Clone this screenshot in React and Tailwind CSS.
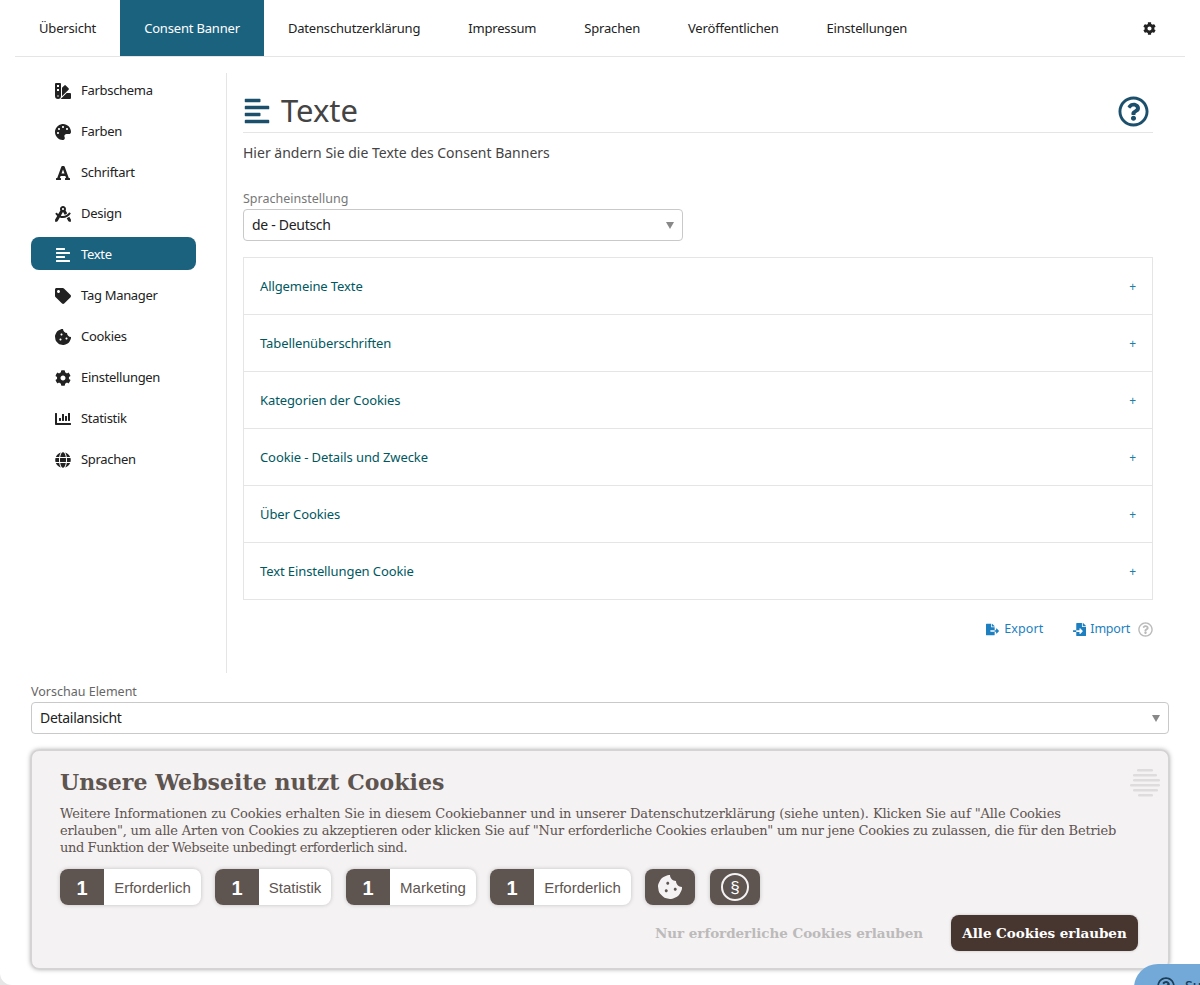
import React from "react";
import {
  FaSwatchbook, FaPalette, FaFont, FaDraftingCompass, FaAlignLeft, FaTag, FaCookieBite, FaCog,
  FaChartBar, FaGlobe, FaFileExport, FaFileImport, FaRegQuestionCircle,
} from "react-icons/fa";

const tabs = ["Übersicht", "Consent Banner", "Datenschutzerklärung", "Impressum", "Sprachen", "Veröffentlichen", "Einstellungen"];
const side = [
  ["Farbschema", FaSwatchbook], ["Farben", FaPalette], ["Schriftart", FaFont], ["Design", FaDraftingCompass],
  ["Texte", FaAlignLeft], ["Tag Manager", FaTag], ["Cookies", FaCookieBite], ["Einstellungen", FaCog],
  ["Statistik", FaChartBar], ["Sprachen", FaGlobe],
];
const acc = ["Allgemeine Texte", "Tabellenüberschriften", "Kategorien der Cookies", "Cookie - Details und Zwecke", "Über Cookies", "Text Einstellungen Cookie"];
const pills = [["Erforderlich", "w-[141px]"], ["Statistik", "w-[116px]"], ["Marketing", "ml-px w-[130px]"], ["Erforderlich", "w-[141px]"]];

function Select({ value, className }) {
  return (
    <div className={`flex h-8 items-center justify-between rounded border border-[#c9c9c9] bg-white pb-[2px] pl-2 pr-[8px] text-[14px] tracking-[-0.3px] text-[#222] ${className}`}>
      <span>{value}</span>
      <span className="mt-[2px] h-0 w-0 border-x-[4px] border-t-[7px] border-x-transparent border-t-[#888]" />
    </div>
  );
}

export default function App() {
  return (
    <div className="relative h-[985px] overflow-hidden bg-[#e6e6e6] font-['Noto_Sans',sans-serif] text-[#222]">
      <div className="h-[985px] rounded-bl-[12px] bg-white px-[15px]">
        <nav className="flex h-[57px] items-stretch border-b border-[#e5e5e5] pr-[29px] text-[13px] tracking-[-0.18px]">
          {tabs.map((t, i) => (
            <div key={t} className={`flex items-center px-6 pt-[2px] ${i === 1 ? "bg-[#1b627f] text-white" : "text-[#222]"}`}>{t}</div>
          ))}
          <div className="ml-auto flex items-center"><FaCog className="text-[13px] text-[#222]" /></div>
        </nav>

        <div className="flex pt-4">
          <aside className="h-[600px] w-[212px] shrink-0 border-r border-[#e5e5e5] pl-4">
            <ul className="flex w-[165px] flex-col gap-2">
              {side.map(([label, Icon]) => (
                <li key={label} className={`flex h-[33px] items-center gap-[10px] rounded-lg pl-6 pt-[2px] text-[13px] tracking-[-0.3px] ${label === "Texte" ? "bg-[#1b627f] text-white" : "text-[#222]"}`}>
                  <span className="flex w-4 justify-center"><Icon className="text-[16px]" /></span>
                  <span>{label}</span>
                </li>
              ))}
            </ul>
          </aside>

          <main className="ml-4 w-[910px]">
            <div className="flex h-[60px] items-center justify-between border-b border-[#e5e5e5] pr-1 pt-[17px]">
              <div className="flex items-center gap-[10px]">
                <FaAlignLeft className="text-[28px] text-[#1b4f6b]" />
                <h1 className="mb-[2px] text-[31px] leading-none text-[#444]">Texte</h1>
              </div>
              <FaRegQuestionCircle className="text-[31px] text-[#1b4f6b]" />
            </div>
            <p className="mt-[10px] text-[14px] leading-5 text-[#444]">Hier ändern Sie die Texte des Consent Banners</p>
            <label className="mt-[28px] block text-[12.5px] leading-4 text-[#777]">Spracheinstellung</label>
            <Select value="de - Deutsch" className="mt-[2px] w-[440px]" />
            <div className="mt-4 border border-[#e5e5e5]">
              {acc.map((a, i) => (
                <div key={a} className={`flex items-center justify-between px-4 text-[13px] tracking-[-0.1px] text-[#00585f] ${i ? "h-[57px] border-t border-[#e5e5e5] pt-[2px]" : "h-[56px] pt-[2px]"}`}>
                  <span>{a}</span>
                  <span className="text-[12px] text-[#1b7fa6]">+</span>
                </div>
              ))}
            </div>
            <div className="mt-5 flex items-center justify-end text-[12.5px] tracking-[-0.2px] text-[#1e7fc0]">
              <FaFileExport className="text-[13px]" />
              <span className="ml-[5px] tracking-[0.1px]">Export</span>
              <FaFileImport className="ml-[30px] text-[13px]" />
              <span className="ml-[4px]">Import</span>
              <FaRegQuestionCircle className="ml-2 text-[15px] text-[#bbb]" />
            </div>
          </main>
        </div>

        <div className="px-4 pt-[11px]">
          <label className="block text-[12.5px] leading-4 text-[#666]">Vorschau Element</label>
          <Select value="Detailansicht" className="mt-[2px]" />

          <section className="relative mt-4 h-[219px] rounded-lg border border-[#d5d3d3] bg-[#f4f2f3] px-7 pt-[17px] font-['DejaVu_Serif',serif] text-[#5e5450] shadow-[0_0_5px_rgba(0,0,0,0.4)]">
            <svg className="absolute right-2 top-[18px] h-[28px] w-[30px]" viewBox="0 0 30 28" fill="#dedcdc">
              <rect x="7" y="0" width="16" height="2.5" rx="1.2" />
              <rect x="3" y="5" width="24" height="2.5" rx="1.2" />
              <rect x="3" y="10" width="27" height="2.5" rx="1.2" />
              <rect x="0" y="15" width="30" height="2.5" rx="1.2" />
              <rect x="3" y="20" width="25" height="2.5" rx="1.2" />
              <rect x="8" y="25" width="15" height="2.5" rx="1.2" />
            </svg>
            <h2 className="text-[22px] font-bold leading-7 tracking-[0.05px]">Unsere Webseite nutzt Cookies</h2>
            <p className="mt-[9px] whitespace-nowrap text-[13px] leading-[17px]">
              <span className="block tracking-[-0.1px]">Weitere Informationen zu Cookies erhalten Sie in diesem Cookiebanner und in unserer Datenschutzerklärung (siehe unten). Klicken Sie auf "Alle Cookies</span>
              <span className="block tracking-[-0.2px]">erlauben", um alle Arten von Cookies zu akzeptieren oder klicken Sie auf "Nur erforderliche Cookies erlauben" um nur jene Cookies zu zulassen, die für den Betrieb</span>
              <span className="block tracking-[-0.4px]">und Funktion der Webseite unbedingt erforderlich sind.</span>
            </p>
            <div className="mt-[13px] flex gap-[14px] font-['Liberation_Sans',sans-serif]">
              {pills.map(([p, w], i) => (
                <div key={i} className={`flex h-9 overflow-hidden rounded-lg bg-white shadow-[0_0_4px_rgba(0,0,0,0.2)] ${w}`}>
                  <span className="flex w-11 shrink-0 items-center justify-center bg-[#5e5450] pt-[2px] text-[20px] font-bold text-white">1</span>
                  <span className="flex flex-1 items-center justify-center pt-[2px] text-[15px] text-[#5e5450]">{p}</span>
                </div>
              ))}
              <div className="flex h-9 w-[50px] items-center justify-center rounded-lg bg-[#5e5450] text-white shadow-[0_0_4px_rgba(0,0,0,0.2)]">
                <FaCookieBite className="text-[24px] text-[#f4f2f3]" />
              </div>
              <div className="ml-px flex h-9 w-[50px] items-center justify-center rounded-lg bg-[#5e5450] text-white shadow-[0_0_4px_rgba(0,0,0,0.2)]">
                <span className="flex h-7 w-7 items-center justify-center rounded-full border-2 border-[#f4f2f3] text-[17px] leading-none">§</span>
              </div>
            </div>
            <div className="mt-[10px] flex items-center justify-end gap-[28px] pr-[2px] text-[13.5px] font-bold tracking-[-0.05px]">
              <span className="text-[#bcbaba]">Nur erforderliche Cookies erlauben</span>
              <span className="flex h-9 w-[187px] items-center justify-center rounded-lg bg-[#47362f] text-white shadow-[0_0_3px_rgba(0,0,0,0.2)]">Alle Cookies erlauben</span>
            </div>
          </section>
        </div>
      </div>
      <div className="absolute left-[1134px] top-[964px] flex h-[50px] w-[120px] items-start gap-[10px] rounded-[24px] bg-[#72a9d8] pl-[23px] pt-[13px] text-[14px] font-medium leading-[18px] text-[#1d3c55]">
        <FaRegQuestionCircle className="shrink-0 text-[18px]" />
        <span>Support</span>
      </div>
    </div>
  );
}
